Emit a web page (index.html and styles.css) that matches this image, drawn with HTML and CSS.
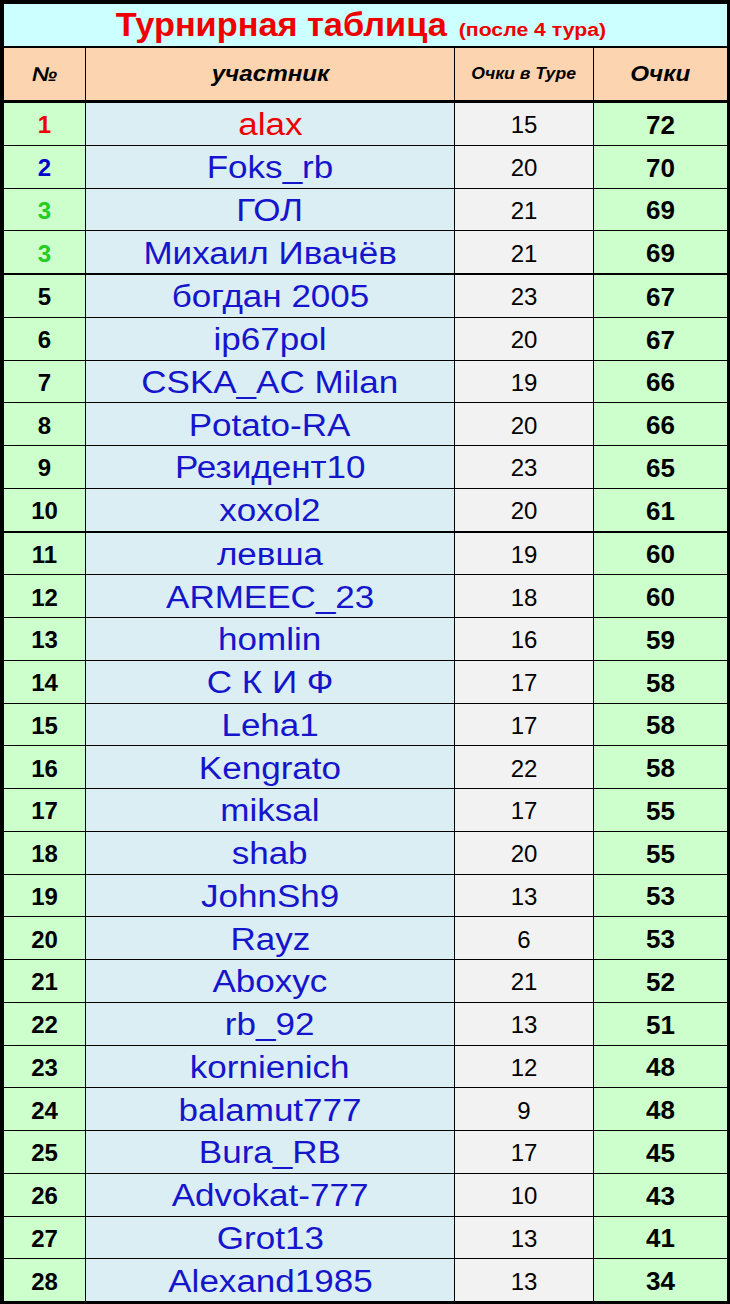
FILE: index.html
```html
<!DOCTYPE html>
<html lang="ru">
<head>
<meta charset="utf-8">
<title>Турнирная таблица</title>
<link rel="stylesheet" href="styles.css">
</head>
<body>
<div class="board">
  <div class="title"><span class="t-main">Турнирная таблица</span><span class="t-sub">(после 4 тура)</span></div>
  <div class="row head">
    <div class="c c1"><span class="s">№</span></div>
    <div class="c c2"><span class="s">участник</span></div>
    <div class="c c3"><span class="s small">Очки в Туре</span></div>
    <div class="c c4"><span class="s">Очки</span></div>
  </div>
  <div class="row"><div class="c c1 red">1</div><div class="c c2 red"><span class="s">alax</span></div><div class="c c3">15</div><div class="c c4">72</div></div>
  <div class="row"><div class="c c1 blue">2</div><div class="c c2"><span class="s">Foks_rb</span></div><div class="c c3">20</div><div class="c c4">70</div></div>
  <div class="row"><div class="c c1 green">3</div><div class="c c2"><span class="s">ГОЛ</span></div><div class="c c3">21</div><div class="c c4">69</div></div>
  <div class="row"><div class="c c1 green">3</div><div class="c c2"><span class="s">Михаил Ивачёв</span></div><div class="c c3">21</div><div class="c c4">69</div></div>
  <div class="row sep"><div class="c c1">5</div><div class="c c2"><span class="s">богдан 2005</span></div><div class="c c3">23</div><div class="c c4">67</div></div>
  <div class="row"><div class="c c1">6</div><div class="c c2"><span class="s">ip67pol</span></div><div class="c c3">20</div><div class="c c4">67</div></div>
  <div class="row"><div class="c c1">7</div><div class="c c2"><span class="s">CSKA_AC Milan</span></div><div class="c c3">19</div><div class="c c4">66</div></div>
  <div class="row"><div class="c c1">8</div><div class="c c2"><span class="s">Potato-RA</span></div><div class="c c3">20</div><div class="c c4">66</div></div>
  <div class="row"><div class="c c1">9</div><div class="c c2"><span class="s">Резидент10</span></div><div class="c c3">23</div><div class="c c4">65</div></div>
  <div class="row"><div class="c c1">10</div><div class="c c2"><span class="s">xoxol2</span></div><div class="c c3">20</div><div class="c c4">61</div></div>
  <div class="row sep"><div class="c c1">11</div><div class="c c2"><span class="s">левша</span></div><div class="c c3">19</div><div class="c c4">60</div></div>
  <div class="row"><div class="c c1">12</div><div class="c c2"><span class="s">ARMEEC_23</span></div><div class="c c3">18</div><div class="c c4">60</div></div>
  <div class="row"><div class="c c1">13</div><div class="c c2"><span class="s">homlin</span></div><div class="c c3">16</div><div class="c c4">59</div></div>
  <div class="row"><div class="c c1">14</div><div class="c c2"><span class="s">С К И Ф</span></div><div class="c c3">17</div><div class="c c4">58</div></div>
  <div class="row"><div class="c c1">15</div><div class="c c2"><span class="s">Leha1</span></div><div class="c c3">17</div><div class="c c4">58</div></div>
  <div class="row"><div class="c c1">16</div><div class="c c2"><span class="s">Kengrato</span></div><div class="c c3">22</div><div class="c c4">58</div></div>
  <div class="row"><div class="c c1">17</div><div class="c c2"><span class="s">miksal</span></div><div class="c c3">17</div><div class="c c4">55</div></div>
  <div class="row"><div class="c c1">18</div><div class="c c2"><span class="s">shab</span></div><div class="c c3">20</div><div class="c c4">55</div></div>
  <div class="row"><div class="c c1">19</div><div class="c c2"><span class="s">JohnSh9</span></div><div class="c c3">13</div><div class="c c4">53</div></div>
  <div class="row"><div class="c c1">20</div><div class="c c2"><span class="s">Rayz</span></div><div class="c c3">6</div><div class="c c4">53</div></div>
  <div class="row"><div class="c c1">21</div><div class="c c2"><span class="s">Aboxyc</span></div><div class="c c3">21</div><div class="c c4">52</div></div>
  <div class="row"><div class="c c1">22</div><div class="c c2"><span class="s">rb_92</span></div><div class="c c3">13</div><div class="c c4">51</div></div>
  <div class="row"><div class="c c1">23</div><div class="c c2"><span class="s">kornienich</span></div><div class="c c3">12</div><div class="c c4">48</div></div>
  <div class="row"><div class="c c1">24</div><div class="c c2"><span class="s">balamut777</span></div><div class="c c3">9</div><div class="c c4">48</div></div>
  <div class="row"><div class="c c1">25</div><div class="c c2"><span class="s">Bura_RB</span></div><div class="c c3">17</div><div class="c c4">45</div></div>
  <div class="row"><div class="c c1">26</div><div class="c c2"><span class="s">Advokat-777</span></div><div class="c c3">10</div><div class="c c4">43</div></div>
  <div class="row"><div class="c c1">27</div><div class="c c2"><span class="s">Grot13</span></div><div class="c c3">13</div><div class="c c4">41</div></div>
  <div class="row"><div class="c c1">28</div><div class="c c2"><span class="s">Alexand1985</span></div><div class="c c3">13</div><div class="c c4">34</div></div>
</div>
</body>
</html>
```
FILE: styles.css
```css
html, body {
  margin: 0;
  padding: 0;
  background: #000;
}
.board {
  width: 730px;
  height: 1304px;
  box-sizing: border-box;
  padding: 4px 3px 3px 4px;
  background: #000;
  display: flex;
  flex-direction: column;
  gap: 1px;
  font-family: "Liberation Sans", Arial, sans-serif;
}
.title {
  height: 42px;
  box-sizing: border-box;
  padding-right: 14px;
  background: #ccffff;
  display: flex;
  align-items: baseline;
  justify-content: center;
  color: #ee0000;
  font-weight: bold;
  margin-bottom: 1px;
  white-space: nowrap;
}
.t-main {
  font-size: 33px;
  line-height: 42px;
  display: inline-block;
  transform: scaleX(1.04);
  margin-right: 30px;
}
.t-sub {
  font-size: 18px;
  display: inline-block;
  transform: scaleX(1.18);
}
.row {
  display: grid;
  grid-template-columns: 81px 368px 138px 133px;
  column-gap: 1px;
  height: 41.75px;
}
.row.head {
  height: 52px;
  margin-bottom: 2px;
}
.row.sep {
  margin-top: 1px;
}
.c {
  display: flex;
  align-items: center;
  justify-content: center;
  white-space: nowrap;
  box-sizing: border-box;
  padding-top: 3px;
}
.s {
  display: inline-block;
  transform: scaleX(1.13);
}
.c1 {
  background: #ccffcc;
  font-weight: bold;
  font-size: 24px;
  color: #000;
}
.c2 {
  background: #dbeef4;
  color: #1515cc;
  font-size: 31px;
}
.c3 {
  background: #f2f2f2;
  color: #000;
  font-size: 24px;
}
.c4 {
  background: #ccffcc;
  color: #000;
  font-weight: bold;
  font-size: 26px;
}
.head .c {
  background: #fcd5b0;
  color: #000;
  font-weight: bold;
  font-style: italic;
  font-size: 22px;
  padding-top: 0;
}
.head .s {
  transform: scaleX(1.1);
}
.head .c1 { font-size: 20px; }
.head .small { font-size: 16px; }
.red { color: #ee0000; }
.blue { color: #0000cc; }
.green { color: #22cc22; }
```
